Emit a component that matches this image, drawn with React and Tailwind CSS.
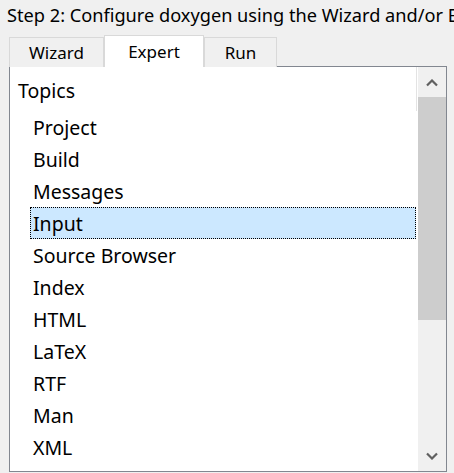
import React from "react";

const topics = [
  "Project",
  "Build",
  "Messages",
  "Input",
  "Source Browser",
  "Index",
  "HTML",
  "LaTeX",
  "RTF",
  "Man",
  "XML",
];

const Chevron = ({ down }) => (
  <svg width="12" height="8" viewBox="0 0 12 8">
    <path
      d={down ? "M1 1.5 L6 6.5 L11 1.5" : "M1 6.5 L6 1.5 L11 6.5"}
      fill="none"
      stroke="#606060"
      strokeWidth="2.2"
    />
  </svg>
);

const Tab = ({ label, active, w }) => (
  <div
    className={
      active
        ? "h-[32px] -mb-px border border-b-0 border-[#d9d9d9] bg-white flex items-center justify-center text-[17px] text-black"
        : "h-[30px] -mb-px border border-b-0 border-[#d9d9d9] bg-[#f0f0f0] flex items-center justify-center text-[17px] text-black"
    }
    style={{ width: w }}
  >
    {label}
  </div>
);

export default function App() {
  return (
    <div className="w-[454px] h-[473px] bg-[#f0f0f0] overflow-hidden font-['Noto_Sans',sans-serif] text-black">
      <div className="h-[34px] pl-[7px] pt-[1px] text-[18.2px] leading-[28px] whitespace-nowrap overflow-hidden">
        Step 2: Configure doxygen using the Wizard and/or Expert
      </div>
      <div className="flex items-end pl-[9px] h-[32px] relative z-10">
        <Tab label="Wizard" w={95} />
        <Tab label="Expert" w={100} active />
        <Tab label="Run" w={73} />
      </div>
      <div className="ml-[9px] w-[438px] h-[406px] border border-[#828790] bg-white flex">
        <div className="flex-1 relative">
          <div className="absolute right-[1px] top-0 w-px h-[44px] bg-[#e3e3e3]" />
          <div className="pt-[6px]">
            <div className="h-[32px] pl-[8px] pt-[2px] leading-[32px] text-[19.5px] mb-[6px]">
              Topics
            </div>
            <div className="ml-[20px] mr-[2px] flex flex-col">
              {topics.map((t) => (
                <div
                  key={t}
                  className={
                    t === "Input"
                      ? "h-[32px] pl-[2px] pt-[2px] leading-[28px] text-[19.5px] bg-[#cce8ff] border border-dotted border-black"
                      : "h-[32px] pl-[3px] pt-[2px] leading-[30px] text-[19.5px]"
                  }
                >
                  {t}
                </div>
              ))}
            </div>
          </div>
        </div>
        <div className="w-[28px] bg-[#f0f0f0] flex flex-col">
          <div className="h-[30px] flex items-center justify-center pt-[2px]">
            <Chevron />
          </div>
          <div className="h-[223px] bg-[#cdcdcd]" />
          <div className="flex-1" />
          <div className="h-[30px] flex items-center justify-center">
            <Chevron down />
          </div>
        </div>
      </div>
    </div>
  );
}
